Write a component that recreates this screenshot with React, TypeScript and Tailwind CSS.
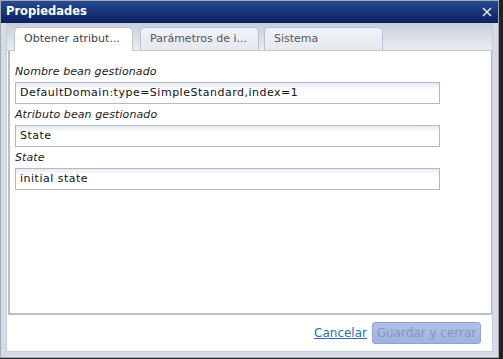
import React from "react";

const font = { fontFamily: '"DejaVu Sans", Verdana, sans-serif' };

function Field({ label, value }: { label: string; value: string }) {
  return (
    <div className="flex flex-col">
      <div className="h-[21px] pt-[3px] text-[11px] leading-[15px] italic text-[#222] tracking-[0.1px]">{label}</div>
      <div className="w-[425px] h-[22px] border border-[#b3b7c7] bg-gradient-to-b from-[#e9ecf1] via-white via-[35%] to-white flex items-center pl-[4px] text-[11px] text-[#111] tracking-[0.5px]">
        {value}
      </div>
    </div>
  );
}

export default function App() {
  return (
    <div className="w-[503px] h-[359px] bg-[#232323] flex items-start" style={font}>
      <div className="w-[499px] h-[358px] bg-[#d5dce6] border border-[#a2a9b4] flex flex-col">
        <div className="h-[22px] bg-gradient-to-b from-[#274a91] to-[#0b2060] flex items-center justify-between pl-[5px] pr-[6px]">
          <span className="text-white font-bold text-[11.5px] leading-none">Propiedades</span>
          <svg width="10" height="10" viewBox="0 0 10 10">
            <path d="M1 1 L9 9 M9 1 L1 9" stroke="#dfe4ee" strokeWidth="1.6" />
          </svg>
        </div>
        <div className="flex-1 flex pl-[5px] pr-[5px] pb-[5px]">
          <div className="flex-1 bg-white border-x border-b border-[#c5cdd8] flex flex-col">
            <div className="h-[28px] bg-gradient-to-b from-[#c8ced9] to-[#e9ecf1] flex items-end pl-[7px] border-b border-[#c2cad6]">
              <div className="w-[119px] h-[24px] -mb-[1px] bg-white border border-b-0 border-[#b9c3d2] rounded-t-[5px] flex items-center pl-[9px] text-[11px] text-[#444]">
                Obtener atribut...
              </div>
              <div className="ml-[7px] w-[119px] h-[23px] bg-gradient-to-b from-[#f1f3f7] to-[#e4e8ef] border border-b-0 border-[#b9c3d2] rounded-t-[5px] flex items-center pl-[9px] text-[11px] text-[#555]">
                Parámetros de i...
              </div>
              <div className="ml-[5px] w-[119px] h-[23px] bg-gradient-to-b from-[#f1f3f7] to-[#e4e8ef] border border-b-0 border-[#b9c3d2] rounded-t-[5px] flex items-center pl-[9px] text-[11px] text-[#555]">
                Sistema
              </div>
            </div>
            <div className="flex-1 ml-[1px] border-l-2 border-r border-b-2 border-[#b7bfcd] pl-[5px] pt-[10px] flex flex-col">
              <Field label="Nombre bean gestionado" value="DefaultDomain:type=SimpleStandard,index=1" />
              <Field label="Atributo bean gestionado" value="State" />
              <Field label="State" value="initial state" />
            </div>
            <div className="h-[36px] flex items-center justify-end pr-[11px] gap-[5px]">
              <span className="text-[12px] text-[#2b6cb5] underline">Cancelar</span>
              <div className="w-[109px] h-[22px] rounded-[3px] bg-gradient-to-b from-[#afc0ea] to-[#9fb2e0] border border-[#93a3cf] flex items-center justify-center text-[12px] text-[#8a95b6]">
                Guardar y cerrar
              </div>
            </div>
          </div>
        </div>
      </div>
    </div>
  );
}
